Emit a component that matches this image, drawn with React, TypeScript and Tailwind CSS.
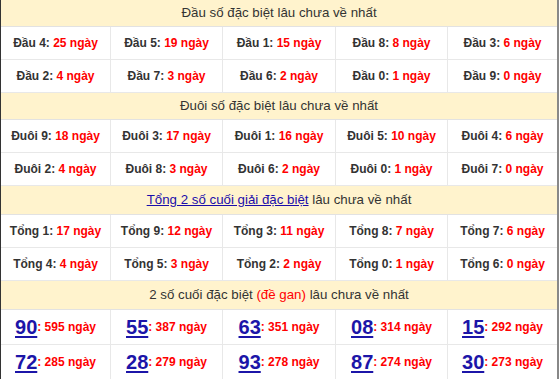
const dau = [
  [["Đầu 4", 25], ["Đầu 5", 19], ["Đầu 1", 15], ["Đầu 8", 8], ["Đầu 3", 6]],
  [["Đầu 2", 4], ["Đầu 7", 3], ["Đầu 6", 2], ["Đầu 0", 1], ["Đầu 9", 0]],
];
const duoi = [
  [["Đuôi 9", 18], ["Đuôi 3", 17], ["Đuôi 1", 16], ["Đuôi 5", 10], ["Đuôi 4", 6]],
  [["Đuôi 2", 4], ["Đuôi 8", 3], ["Đuôi 6", 2], ["Đuôi 0", 1], ["Đuôi 7", 0]],
];
const tong = [
  [["Tổng 1", 17], ["Tổng 9", 12], ["Tổng 3", 11], ["Tổng 8", 7], ["Tổng 7", 6]],
  [["Tổng 4", 4], ["Tổng 5", 3], ["Tổng 2", 2], ["Tổng 0", 1], ["Tổng 6", 0]],
];
const gan = [
  [["90", 595], ["55", 387], ["63", 351], ["08", 314], ["15", 292]],
  [["72", 285], ["28", 279], ["93", 278], ["87", 274], ["30", 273]],
];

const Header = ({ children, h }: { children: React.ReactNode; h: string }) => (
  <div className={`${h} flex items-center justify-center bg-[#fff3cd] border-b border-[#e2e2e2] text-[13.3px] text-[#333]`}>
    {children}
  </div>
);

const Rows = ({ rows }: { rows: (string | number)[][][] }) => (
  <>
    {rows.map((row, i) => (
      <div key={i} className="grid grid-cols-[110px_112px_113px_112px_1fr] h-[33px] border-b border-[#e8e8e8]">
        {row.map(([label, n], j) => (
          <div key={j} className={`flex items-center justify-center text-[12px] font-bold ${j < 4 ? "border-r border-[#e8e8e8]" : ""}`}>
            <span className="text-[#333]">{label}:&nbsp;</span>
            <span className="text-[#ff0000]">{n} ngày</span>
          </div>
        ))}
      </div>
    ))}
  </>
);

const App = () => {
  return (
    <div className="w-[559px] h-[379px] overflow-hidden bg-white border-l border-[#333] border-r-2 border-r-[#888] font-['Liberation_Sans',Arial,sans-serif]">
      <Header h="h-[27px]">Đầu số đặc biệt lâu chưa về nhất</Header>
      <Rows rows={dau} />
      <Header h="h-[27px]">Đuôi số đặc biệt lâu chưa về nhất</Header>
      <Rows rows={duoi} />
      <Header h="h-[29px]">
        <a className="text-[#1a0dab] underline">Tổng 2 số cuối giải đặc biệt</a>
        &nbsp;lâu chưa về nhất
      </Header>
      <Rows rows={tong} />
      <Header h="h-[29px]">
        2 số cuối đặc biệt&nbsp;<span className="text-[#ff0000]">(đề gan)</span>&nbsp;lâu chưa về nhất
      </Header>
      {gan.map((row, i) => (
        <div key={i} className="grid grid-cols-[110px_112px_113px_112px_1fr] h-[35px] border-b border-[#e8e8e8]">
          {row.map(([num, n], j) => (
            <div key={j} className={`flex items-center justify-center ${j < 4 ? "border-r border-[#e8e8e8]" : ""}`}>
              <span className="text-[20px] font-bold text-[#1c15a8] underline underline-offset-2 leading-none">{num}</span>
              <span className="text-[12px] font-bold text-[#ff0000]">: {n} ngày</span>
            </div>
          ))}
        </div>
      ))}
    </div>
  );
};

export default App;
